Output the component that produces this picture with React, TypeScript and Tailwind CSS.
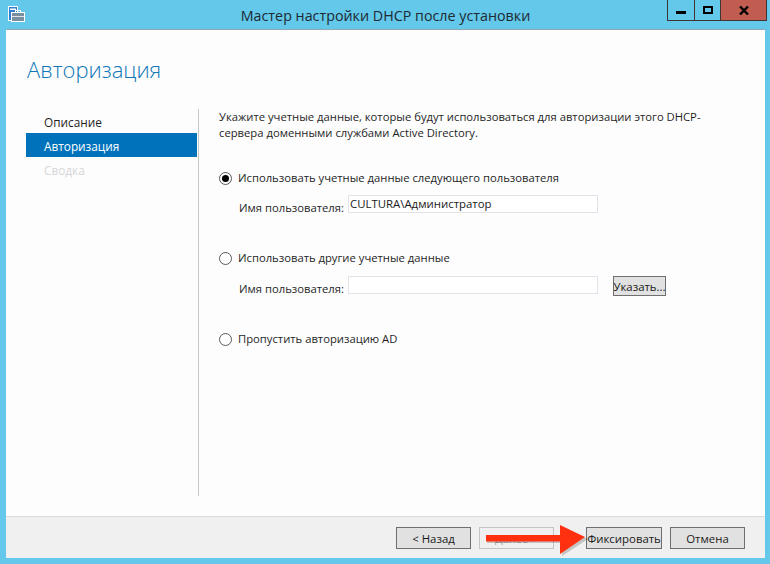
const font = { fontFamily: '"Open Sans", "Noto Sans", sans-serif' };

function WindowIcon() {
  return (
    <svg width="18" height="18" viewBox="0 0 18 18" className="shrink-0">
      <rect x="0.5" y="0.5" width="9" height="14" fill="#2f7fd0" stroke="#fff" />
      <rect x="2" y="2.5" width="6" height="1.5" fill="#fff" />
      <rect x="3.5" y="6.5" width="13" height="9" fill="#7a8f9f" stroke="#fff" />
      <rect x="7.5" y="4.5" width="5" height="2" fill="none" stroke="#fff" />
      <rect x="4" y="10" width="12" height="1" fill="#dfe6ea" />
    </svg>
  );
}

function Radio({ checked }: { checked?: boolean }) {
  return (
    <span className="w-[13px] h-[13px] rounded-full border border-[#5a5a5a] bg-white flex items-center justify-center shrink-0">
      {checked && <span className="w-[7px] h-[7px] rounded-full bg-black" />}
    </span>
  );
}

function Btn({ label, disabled, className }: { label: string; disabled?: boolean; className?: string }) {
  return (
    <div
      className={`flex items-center justify-center border pt-[1px] text-[11.4px] ${
        disabled ? "border-[#c4c4c4] bg-[#f0f0f0] text-[#a5a5a5]" : "border-[#6f6f6f] bg-[#e1e1e1] text-[#1a1a1a]"
      } ${className ?? ""}`}
    >
      {label}
    </div>
  );
}

function UserRow({ value, children }: { value?: string; children?: React.ReactNode }) {
  return (
    <div className="flex items-start h-[20px] pl-[20px]">
      <span className="w-[109px] text-[11.25px] leading-[16px] text-[#1f1f1f] pt-[5px]">Имя пользователя:</span>
      <div className="w-[250px] h-[18px] border border-[#e2e2ea] bg-white pl-[1px] text-[11.4px] leading-[15px] text-[#1a1a1a]">{value}</div>
      {children}
    </div>
  );
}

export default function App() {
  return (
    <div style={font} className="relative w-[770px] h-[564px] overflow-hidden bg-[#63c8ea] flex flex-col">
      <div className="h-[29px] flex items-start shrink-0 relative">
        <div className="pl-[8px] pt-[6px]">
          <WindowIcon />
        </div>
        <div className="flex-1 text-center text-[14.3px] text-[#1c2a33] pt-[5px] pl-[78px]">Мастер настройки DHCP после установки</div>
        <div className="flex h-[21px] mr-[3px] border border-t-0 border-[#3f3535] shrink-0">
          <div className="w-[27px] border-r border-[#3f3535] flex items-center justify-center">
            <span className="w-[10px] h-[3px] bg-black mt-[4px]" />
          </div>
          <div className="w-[26px] border-r border-[#3f3535] flex items-start justify-center">
            <span className="w-[10px] h-[8px] border-2 border-black mt-[6px]" />
          </div>
          <div className="w-[45px] bg-[#c15c50] flex items-center justify-center">
            <svg width="10" height="9" viewBox="0 0 10 9">
              <path d="M1 0.5 L9 8.5 M9 0.5 L1 8.5" stroke="#000" strokeWidth="2.4" />
            </svg>
          </div>
        </div>
      </div>

      <div className="flex-1 ml-[6px] mr-[5px] mb-[6px] border-t border-[#8fa8b3] bg-[#fdfdfd] flex flex-col min-h-0">
        <div className="h-[79px] shrink-0 pl-[21px] pt-[24px] text-[22px] font-light leading-[30px] text-[#0f77b8]">Авторизация</div>

        <div className="flex-1 flex min-h-0">
          <div className="w-[193px] border-r border-[#c8c8c8] mb-[20px] shrink-0 text-[11.8px]">
            <div className="w-[191px]">
              <div className="h-[24px] pl-[38px] pt-[3px] flex items-center text-[#1f1f1f]">Описание</div>
              <div className="h-[24px] ml-[20px] pl-[18px] pt-[3px] flex items-center bg-[#0072bc] text-white">Авторизация</div>
              <div className="h-[24px] pl-[38px] pt-[3px] flex items-center text-[#d6d6d6]">Сводка</div>
            </div>
          </div>

          <div className="flex-1 pl-[20px] text-[11.25px] text-[#1f1f1f]">
            <p className="leading-[16px] w-[490px]">
              Укажите учетные данные, которые будут использоваться для авторизации этого DHCP-сервера доменными службами Active Directory.
            </p>
            <div className="flex items-center gap-[6px] mt-[27px] h-[20px]">
              <Radio checked />
              <span>Использовать учетные данные следующего пользователя</span>
            </div>
            <div className="mt-[7px]">
              <UserRow value="CULTURA\Администратор" />
            </div>
            <div className="flex items-center gap-[6px] mt-[34px] h-[19px]">
              <Radio />
              <span>Использовать другие учетные данные</span>
            </div>
            <div className="mt-[8px]">
              <UserRow>
                <Btn label="Указать..." className="w-[53px] h-[20px] ml-[15px]" />
              </UserRow>
            </div>
            <div className="flex items-center gap-[6px] mt-[34px] h-[19px]">
              <Radio />
              <span>Пропустить авторизацию AD</span>
            </div>
          </div>
        </div>

        <div className="h-[42px] shrink-0 border-t border-[#dcdcdc] bg-[#f0f0f0] flex items-start pt-[10px] pl-[390px]">
          <Btn label="< Назад" className="w-[75px] h-[22px]" />
          <Btn label="Далее >" disabled className="w-[75px] h-[22px] ml-[8px]" />
          <Btn label="Фиксировать" className="w-[76px] h-[22px] ml-[32px]" />
          <Btn label="Отмена" className="w-[75px] h-[22px] ml-[8px]" />
        </div>
      </div>

      {/* red arrow drawn over the buttons */}
      <svg width="110" height="40" viewBox="0 0 110 40" className="absolute left-[484px] top-[522px]">
        <path d="M3 15 L78 15 L78 6 L104 17 L78 34 L78 21 L3 21 Z" fill="#000" fillOpacity="0.18" />
        <path d="M2 13 L76 13 L76 3 L101 15 L76 32 L76 19.5 L2 19.5 Z" fill="#ff3010" />
      </svg>
    </div>
  );
}
